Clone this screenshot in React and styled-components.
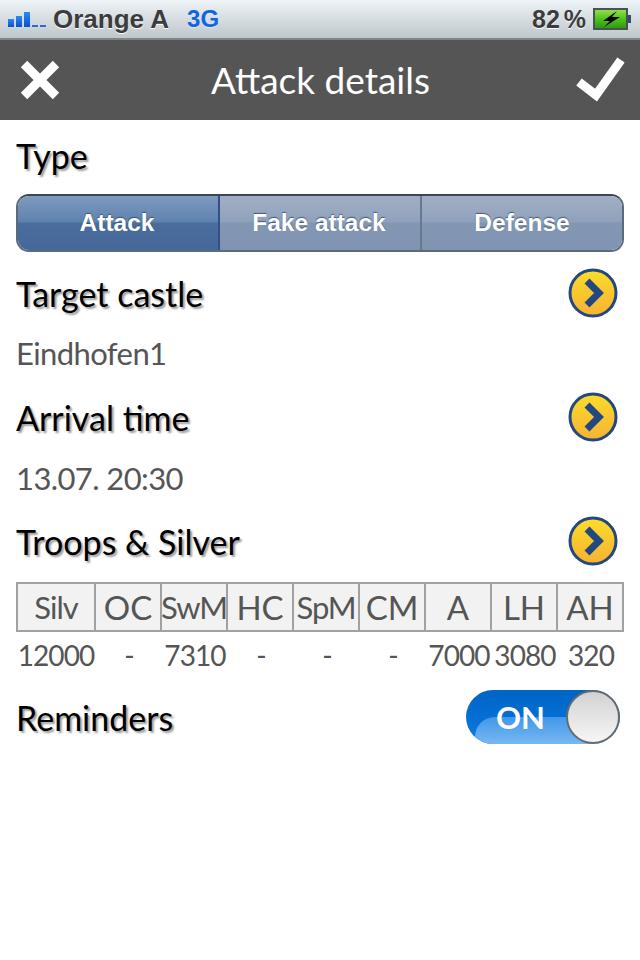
import React from "react";
import styled, { createGlobalStyle } from "styled-components";

const Global = createGlobalStyle`
  html, body { margin: 0; padding: 0; background: #fff; }
  body { width: 640px; height: 960px; overflow: hidden; font-family: "Lato", "Open Sans", sans-serif; }
`;
const Page = styled.div`width: 640px; height: 960px; background: #fff; display: flex; flex-direction: column;`;
const StatusBar = styled.div`
  height: 38px; border-bottom: 2px solid #7d868c; display: flex; align-items: center; padding: 0 8px;
  background: linear-gradient(#eef4f8 0%, #dde4e8 35%, #c0c7cb 100%);
  font: bold 25px "Liberation Sans", Arial, sans-serif; color: #3c3c3e; text-shadow: 0 1px 0 #fff;
`;
const Carrier = styled.span`margin-left: 7px; font-size: 26px;`;
const Network = styled.span`
  margin-left: 18px; font-size: 24px; color: #1463e0; text-shadow: 0 1px 0 #dfe8f0;
`;
const Battery = styled.span`margin-left: auto; display: flex; align-items: center; gap: 7px;`;
const Percent = styled.span`word-spacing: -3px;`;
const NavBar = styled.div`
  height: 80px; background: #555; display: flex; align-items: center; justify-content: space-between; padding: 0 14px 0 20px;
`;
const NavTitle = styled.div`color: #fff; font-size: 37px; line-height: 1; margin: 0 0 2px 5px;`;
const Content = styled.div`padding: 0 16px; display: flex; flex-direction: column;`;
const HeadRow = styled.div`
  display: flex; align-items: center; justify-content: space-between; height: ${p => p.$h}px; flex: none; padding-right: ${p => p.$pr ?? 6}px;
`;
const Heading = styled.div`
  font-size: 34px; line-height: 1; color: #000; margin-top: 2px; text-shadow: 2px 2px 2px #9b9b9b;
`;
const Segments = styled.div`
  display: grid; grid-template-columns: 202px 202px 200px; height: 58px; border-radius: 13px; overflow: hidden; box-sizing: border-box;
  border: 2px solid #5a6b80; border-top-color: #3e4650; margin-top: 4px; flex: none;
`;
const Segment = styled.div`
  display: flex; align-items: center; justify-content: center; padding-right: ${p => p.$last ? 0 : 2}px;
  font: bold 24.5px "Liberation Sans", Arial, sans-serif; color: #fff; text-shadow: 0 -1px 1px rgba(50,70,100,.8);
  border-right: ${p => p.$last ? "none" : `2px solid ${p.$active ? "#2f5284" : "#66798f"}`};
  background: ${p => p.$active
    ? "linear-gradient(#7e9abf 0%, #5f82ad 48%, #4a6d9e 50%, #446898 100%)"
    : "linear-gradient(#a1afc4 0%, #8fa1bb 48%, #8397b3 50%, #7f94b1 100%)"};
`;
const Value = styled.div`
  font-size: 31px; line-height: 1; color: #555; letter-spacing: -.6px; height: 40px; flex: none; display: flex; align-items: center; padding-bottom: 2px; box-sizing: border-box;
`;
const Table = styled.div`
  display: grid; grid-template-columns: 80px repeat(8, 66px); width: 608px; box-sizing: border-box; flex: none;
`;
const HeadCell = styled.div`
  height: 50px; box-sizing: border-box; background: #f2f2f2; border: solid #a1a1a1; border-width: 2px 2px 2px ${p => p.$first ? 2 : 0}px;
  display: flex; align-items: center; justify-content: center; color: #555; white-space: nowrap;
  font-size: ${p => p.$wide ? 33 : 31}px; letter-spacing: ${p => p.$wide ? 0 : -1}px;
`;
const Cell = styled.div`
  height: 46px; display: flex; align-items: center; justify-content: center; color: #555; font-size: 28px; letter-spacing: -.9px; white-space: nowrap;
`;
const Switch = styled.div`
  width: 154px; height: 54px; border-radius: 27px; position: relative; overflow: hidden;
  background: linear-gradient(#0063c6 0%, #0a7be0 100%);
  display: flex; align-items: center; color: #fff; font-weight: 700; font-size: 31px;
  &::before {
    content: ""; position: absolute; left: 9px; right: 0; top: 27px; bottom: 0; border-top-left-radius: 20px;
    background: linear-gradient(#3f97ea, #78b8f1);
  }
`;
const OnLabel = styled.span`margin-left: 30px; position: relative;`;
const Knob = styled.div`
  position: absolute; right: 0; top: 0; width: 54px; height: 54px; border-radius: 50%; box-sizing: border-box;
  border: 2px solid #6a6a6a; background: linear-gradient(#d2d2d2, #f6f6f6);
`;

const Signal = () => (
  <svg width="38" height="18" viewBox="0 0 38 18">
    <defs><linearGradient id="s" x1="0" y1="0" x2="0" y2="1"><stop offset="0" stopColor="#2a8cf0"/><stop offset="1" stopColor="#0a4fd0"/></linearGradient></defs>
    <rect x="0" y="9" width="6" height="8" fill="url(#s)"/>
    <rect x="8" y="6" width="6" height="11" fill="url(#s)"/>
    <rect x="16" y="2" width="6" height="15" fill="url(#s)"/>
    <rect x="24" y="15" width="6" height="2" fill="#2a6ad8"/>
    <rect x="32" y="15" width="6" height="2" fill="#2a6ad8"/>
  </svg>
);
const BatteryIcon = () => (
  <svg width="39" height="22" viewBox="0 0 39 22">
    <defs><linearGradient id="b" x1="0" y1="0" x2="0" y2="1"><stop offset="0" stopColor="#8fe04a"/><stop offset=".5" stopColor="#4fc21a"/><stop offset="1" stopColor="#2f9a10"/></linearGradient></defs>
    <rect x="1" y="1" width="33" height="20" fill="#e8eef0" stroke="#4a5058" strokeWidth="2"/>
    <rect x="2" y="2" width="31" height="18" fill="url(#b)"/>
    <rect x="35" y="7" width="3" height="8" fill="#3a4a6a"/>
    <path d="M24 3 L10 13 H17 L11 19 L27 9 H19 Z" fill="#000"/>
  </svg>
);
const CloseIcon = () => (
  <svg width="40" height="40" viewBox="0 0 40 40"><path d="M4 4 L36 36 M36 4 L4 36" stroke="#fff" strokeWidth="9"/></svg>
);
const CheckIcon = () => (
  <svg width="50" height="46" viewBox="0 0 50 46"><path d="M3 25 L20 38 L45 3" stroke="#fff" strokeWidth="9" fill="none"/></svg>
);
const Arrow = () => {
  const id = React.useId();
  return (
    <svg width="50" height="50" viewBox="0 0 50 50">
      <defs><linearGradient id={id} x1="0" y1="0" x2="0" y2="1"><stop offset="0" stopColor="#fbdc2a"/><stop offset="1" stopColor="#f6b233"/></linearGradient></defs>
      <circle cx="25" cy="25" r="23" fill={`url(#${id})`} stroke="#23477f" strokeWidth="3"/>
      <path d="M19 13 L31 25 L19 37" fill="none" stroke="#23477f" strokeWidth="7"/>
    </svg>
  );
};

const heads = [
  { label: "Silv" }, { label: "OC", wide: true }, { label: "SwM" }, { label: "HC", wide: true },
  { label: "SpM" }, { label: "CM", wide: true }, { label: "A", wide: true }, { label: "LH", wide: true }, { label: "AH", wide: true },
];
const vals = ["12000", "-", "7310", "-", "-", "-", "7000", "3080", "320"];

export default function App() {
  return (
    <Page>
      <Global />
      <StatusBar>
        <Signal />
        <Carrier>Orange A</Carrier>
        <Network>3G</Network>
        <Battery><Percent>82 %</Percent><BatteryIcon /></Battery>
      </StatusBar>
      <NavBar>
        <CloseIcon />
        <NavTitle>Attack details</NavTitle>
        <CheckIcon />
      </NavBar>
      <Content>
        <HeadRow $h={70}><Heading>Type</Heading></HeadRow>
        <Segments>
          <Segment $active>Attack</Segment>
          <Segment>Fake attack</Segment>
          <Segment $last>Defense</Segment>
        </Segments>
        <HeadRow $h={82}><Heading>Target castle</Heading><Arrow /></HeadRow>
        <Value>Eindhofen1</Value>
        <HeadRow $h={85}><Heading>Arrival time</Heading><Arrow /></HeadRow>
        <Value>13.07. 20:30</Value>
        <HeadRow $h={83}><Heading>Troops &amp; Silver</Heading><Arrow /></HeadRow>
        <Table>
          {heads.map((h, i) => <HeadCell key={h.label} $first={i === 0} $wide={h.wide}>{h.label}</HeadCell>)}
          {vals.map((v, i) => <Cell key={i}>{v}</Cell>)}
        </Table>
        <HeadRow $pr={4} $h={78}><Heading>Reminders</Heading>
          <Switch><OnLabel>ON</OnLabel><Knob /></Switch>
        </HeadRow>
      </Content>
    </Page>
  );
}
